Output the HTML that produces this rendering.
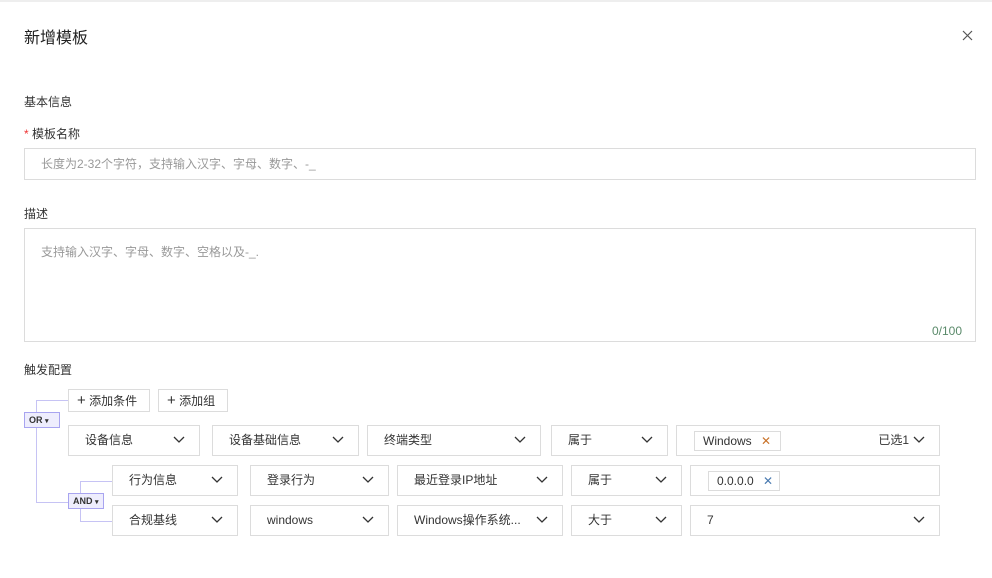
<!DOCTYPE html><html><head><meta charset="utf-8"><style>
*{box-sizing:border-box;margin:0;padding:0}
body{width:992px;height:578px;background:#fff;font-family:"Liberation Sans","Noto Sans CJK SC",sans-serif;font-size:12px;color:#333;position:relative;overflow:hidden}
.a{position:absolute}
.b{position:absolute;border:1px solid #dcdcdc;background:#fff;height:31px;line-height:29px;padding-left:16px;font-size:12px;color:#333}
.b svg{position:absolute;right:14px;top:10px}
.tag{position:absolute;border:1px solid #dcdcdc;height:20px;line-height:18px;font-size:12px;padding-left:8px}
.lg{position:absolute;border:1px solid #a8a4f0;background:#eeedfd;font-size:9px;font-weight:bold;color:#333;height:16px;line-height:14px;padding-left:4px}
.ln{position:absolute;background:#c6c3f4}
.btn{position:absolute;border:1px solid #dcdcdc;height:23px;line-height:21px;font-size:12px;padding-left:8px}
</style></head><body>
<div class="a" style="left:0;top:0;width:992px;height:2px;background:#eee"></div>
<div class="a" style="left:24px;top:24px;font-size:16px;color:#222">新增模板</div>
<svg class="a" style="left:962px;top:30px" width="11" height="11"><path d="M1 1L10 10M10 1L1 10" stroke="#555" stroke-width="1.2"/></svg>
<div class="a" style="left:24px;top:93px">基本信息</div>
<div class="a" style="left:24px;top:125px"><span style="color:#e33">*</span> 模板名称</div>
<div class="a" style="left:24px;top:148px;width:952px;height:32px;border:1px solid #dcdcdc;padding-left:16px;line-height:30px;color:#999">长度为2-32个字符，支持输入汉字、字母、数字、-_</div>
<div class="a" style="left:24px;top:205px">描述</div>
<div class="a" style="left:24px;top:228px;width:952px;height:114px;border:1px solid #dcdcdc;padding:14px 16px;color:#999">支持输入汉字、字母、数字、空格以及-_.</div>
<div class="a" style="left:932px;top:324px;color:#5a8a6a">0/100</div>
<div class="a" style="left:24px;top:361px">触发配置</div>
<div class="ln" style="left:36px;top:400px;width:1px;height:103px"></div>
<div class="ln" style="left:36px;top:400px;width:32px;height:1px"></div>
<div class="ln" style="left:36px;top:502px;width:32px;height:1px"></div>
<div class="ln" style="left:80px;top:481px;width:1px;height:41px"></div>
<div class="ln" style="left:80px;top:481px;width:32px;height:1px"></div>
<div class="ln" style="left:80px;top:521px;width:32px;height:1px"></div>
<div class="lg" style="left:24px;top:412px;width:36px">OR <span style="font-size:7px">▾</span></div>
<div class="lg" style="left:68px;top:493px;width:36px">AND <span style="font-size:7px">▾</span></div>
<div class="btn" style="left:68px;top:389px;width:82px"><span style="font-size:15px">+</span> 添加条件</div>
<div class="btn" style="left:158px;top:389px;width:70px"><span style="font-size:15px">+</span> 添加组</div>
<div class="b" style="left:68px;top:425px;width:132px">设备信息<svg width="12" height="8"><path d="M1 1L6 6L11 1" fill="none" stroke="#333" stroke-width="1.3"/></svg></div>
<div class="b" style="left:212px;top:425px;width:147px">设备基础信息<svg width="12" height="8"><path d="M1 1L6 6L11 1" fill="none" stroke="#333" stroke-width="1.3"/></svg></div>
<div class="b" style="left:367px;top:425px;width:174px">终端类型<svg width="12" height="8"><path d="M1 1L6 6L11 1" fill="none" stroke="#333" stroke-width="1.3"/></svg></div>
<div class="b" style="left:551px;top:425px;width:117px">属于<svg width="12" height="8"><path d="M1 1L6 6L11 1" fill="none" stroke="#333" stroke-width="1.3"/></svg></div>
<div class="b" style="left:676px;top:425px;width:264px"><span style="position:absolute;right:30px;top:0">已选1</span><svg width="12" height="8"><path d="M1 1L6 6L11 1" fill="none" stroke="#333" stroke-width="1.3"/></svg></div>
<div class="tag" style="left:694px;top:431px;width:87px">Windows <span style="color:#c9732a;margin-left:6px">✕</span></div>
<div class="b" style="left:112px;top:465px;width:126px">行为信息<svg width="12" height="8"><path d="M1 1L6 6L11 1" fill="none" stroke="#333" stroke-width="1.3"/></svg></div>
<div class="b" style="left:250px;top:465px;width:139px">登录行为<svg width="12" height="8"><path d="M1 1L6 6L11 1" fill="none" stroke="#333" stroke-width="1.3"/></svg></div>
<div class="b" style="left:397px;top:465px;width:166px">最近登录IP地址<svg width="12" height="8"><path d="M1 1L6 6L11 1" fill="none" stroke="#333" stroke-width="1.3"/></svg></div>
<div class="b" style="left:571px;top:465px;width:111px">属于<svg width="12" height="8"><path d="M1 1L6 6L11 1" fill="none" stroke="#333" stroke-width="1.3"/></svg></div>
<div class="b" style="left:690px;top:465px;width:250px"></div>
<div class="tag" style="left:708px;top:471px;width:72px">0.0.0.0 <span style="color:#4a7ab0;margin-left:6px">✕</span></div>
<div class="b" style="left:112px;top:505px;width:126px">合规基线<svg width="12" height="8"><path d="M1 1L6 6L11 1" fill="none" stroke="#333" stroke-width="1.3"/></svg></div>
<div class="b" style="left:250px;top:505px;width:139px">windows<svg width="12" height="8"><path d="M1 1L6 6L11 1" fill="none" stroke="#333" stroke-width="1.3"/></svg></div>
<div class="b" style="left:397px;top:505px;width:166px">Windows操作系统...<svg width="12" height="8"><path d="M1 1L6 6L11 1" fill="none" stroke="#333" stroke-width="1.3"/></svg></div>
<div class="b" style="left:571px;top:505px;width:111px">大于<svg width="12" height="8"><path d="M1 1L6 6L11 1" fill="none" stroke="#333" stroke-width="1.3"/></svg></div>
<div class="b" style="left:690px;top:505px;width:250px">7<svg width="12" height="8"><path d="M1 1L6 6L11 1" fill="none" stroke="#333" stroke-width="1.3"/></svg></div>
</body></html>
